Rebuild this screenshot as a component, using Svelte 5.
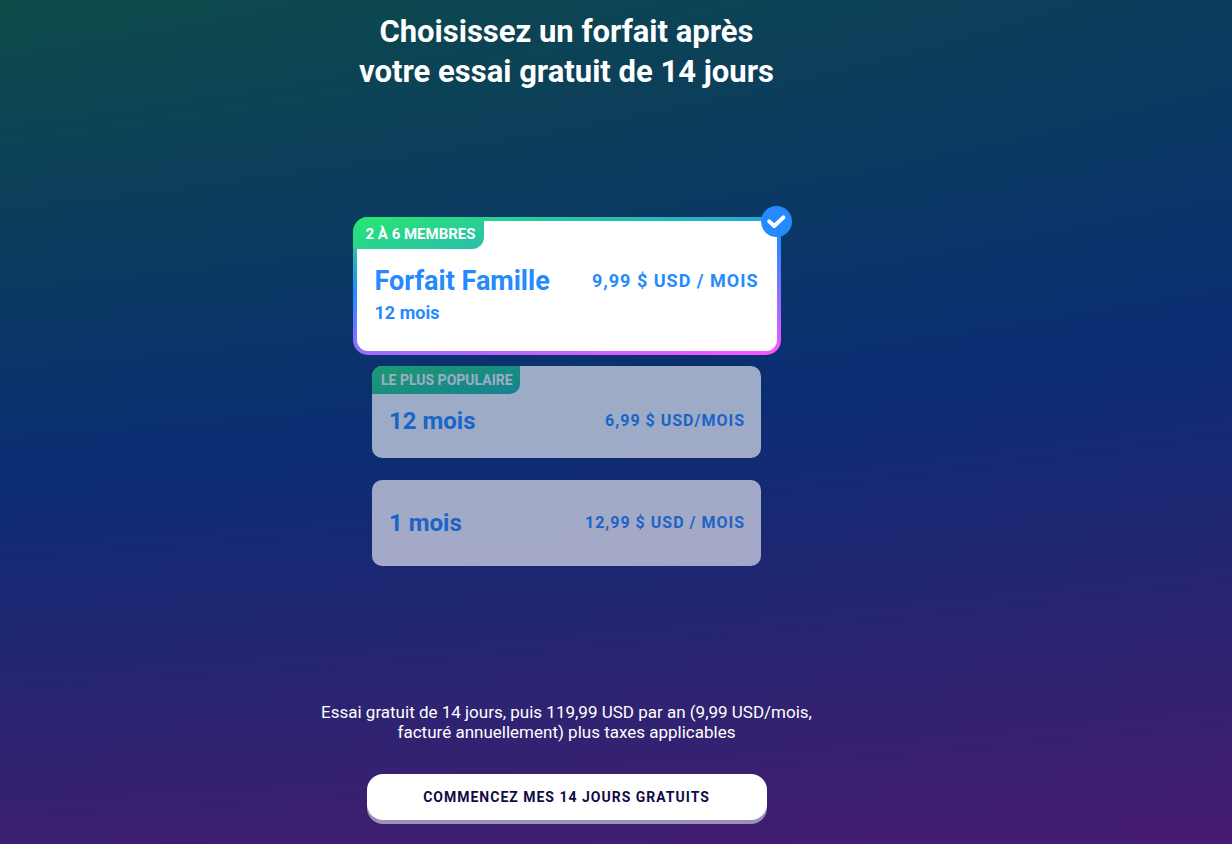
<script>
  let plans = [
    {
      id: "family",
      tag: "2 À 6 MEMBRES",
      title: "Forfait Famille",
      length: "12 mois",
      price: "9,99 $ USD / MOIS",
    },
    {
      id: "yearly",
      tag: "LE PLUS POPULAIRE",
      title: "12 mois",
      price: "6,99 $ USD/MOIS",
    },
    {
      id: "monthly",
      title: "1 mois",
      price: "12,99 $ USD / MOIS",
    },
  ];

  let selected = "family";
</script>

<form class="page" on:submit|preventDefault>
  <h1>Choisissez un forfait après<br />votre essai gratuit de 14 jours</h1>

  <div class="plans" role="radiogroup" aria-label="Forfaits">
    {#each plans as plan}
      <label class="plan {plan.id}" class:selected={selected === plan.id}>
        <input type="radio" name="plan" value={plan.id} bind:group={selected} />
        {#if plan.tag}
          <span class="tag">{plan.tag}</span>
        {/if}
        <span class="row">
          <span class="name">
            <span class="title">{plan.title}</span>
            {#if plan.length}
              <span class="length">{plan.length}</span>
            {/if}
          </span>
          <span class="price">{plan.price}</span>
        </span>
        {#if selected === plan.id}
          <svg class="check" viewBox="0 0 31 31" aria-hidden="true">
            <circle cx="15.5" cy="15.5" r="15.5" fill="#268aff" />
            <path
              d="M8.2 15.4 L13.2 20 L22.4 11.4"
              fill="none"
              stroke="#fff"
              stroke-width="4"
              stroke-linecap="round"
              stroke-linejoin="round"
            />
          </svg>
        {/if}
      </label>
    {/each}
  </div>

  <p>
    Essai gratuit de 14 jours, puis 119,99 USD par an (9,99 USD/mois,<br />
    facturé annuellement) plus taxes applicables
  </p>

  <button type="submit">COMMENCEZ MES 14 JOURS GRATUITS</button>
</form>

<style>
  :global(body) {
    margin: 0;
  }

  .page {
    box-sizing: border-box;
    min-height: 100vh;
    padding: 12px 99px 20px 0;
    display: flex;
    flex-direction: column;
    align-items: center;
    font-family: Roboto, sans-serif;
    color: #fff;
    background: radial-gradient(
      481% 148% at -97% -35%,
      #0c4b49 31%,
      #0b2d74 65%,
      #471c70 100%
    );
  }

  h1 {
    margin: 0 0 125px;
    font-size: 31px;
    line-height: 40px;
    font-weight: 700;
    text-align: center;
  }

  .plans {
    width: 100%;
    display: flex;
    flex-direction: column;
    align-items: center;
  }

  .plan {
    position: relative;
    box-sizing: border-box;
    width: 100%;
    max-width: 389px;
    border-radius: 10px;
    background: #fff;
    color: #268aff;
    opacity: 0.6;
    cursor: pointer;
  }

  .plan.family {
    max-width: 428px;
    margin-bottom: 11px;
    border: 4px solid transparent;
    border-radius: 15px;
  }

  .plan.yearly {
    margin-bottom: 22px;
  }

  .plan.selected {
    opacity: 1;
  }

  .family.selected {
    background:
      linear-gradient(#fff, #fff) padding-box,
      linear-gradient(173deg, #26e96f, #268aff 40%, #fc55ff) border-box;
  }

  input {
    position: absolute;
    opacity: 0;
  }

  .tag {
    display: block;
    width: fit-content;
    padding: 0 7px 0 9px;
    border-radius: 10px 0 10px 0;
    font-size: 14px;
    line-height: 28px;
    font-weight: 700;
    color: #fff;
    background: linear-gradient(166deg, #26e070, #20b8a8);
  }

  .family .tag {
    margin: -4px 0 0 -4px;
    padding: 3px 8px 1px 13px;
    border-radius: 15px 0 12px 0;
    font-size: 15px;
    background: linear-gradient(166deg, #26e96f, #2bbdae);
  }

  .row {
    display: flex;
    justify-content: space-between;
    padding: 29px 16px 29px 17px;
  }

  .yearly .row {
    padding-top: 13px;
    padding-bottom: 23px;
  }

  .family .row {
    padding: 16px 18px 26px;
  }

  .name {
    display: flex;
    flex-direction: column;
    gap: 4px;
  }

  .title {
    font-size: 24px;
    line-height: 28px;
    font-weight: 700;
  }

  .length {
    font-size: 18px;
    line-height: 24px;
    font-weight: 700;
  }

  .price {
    font-size: 16px;
    line-height: 28px;
    font-weight: 700;
    letter-spacing: 1px;
  }

  .family .title {
    font-size: 27px;
    line-height: 32px;
  }

  .family .price {
    font-size: 18px;
    line-height: 32px;
  }

  .check {
    position: absolute;
    top: -15px;
    right: -15px;
    width: 31px;
    height: 31px;
  }

  p {
    margin: 136px 0 32px;
    font-size: 17px;
    line-height: 20px;
    text-align: center;
  }

  button {
    width: 100%;
    max-width: 400px;
    height: 46px;
    border: none;
    border-radius: 16px;
    font-family: inherit;
    font-size: 14px;
    font-weight: 700;
    letter-spacing: 1px;
    color: #100b45;
    background: #fff;
    box-shadow: 0 4px 0 #9c8fb8;
    cursor: pointer;
  }
</style>
